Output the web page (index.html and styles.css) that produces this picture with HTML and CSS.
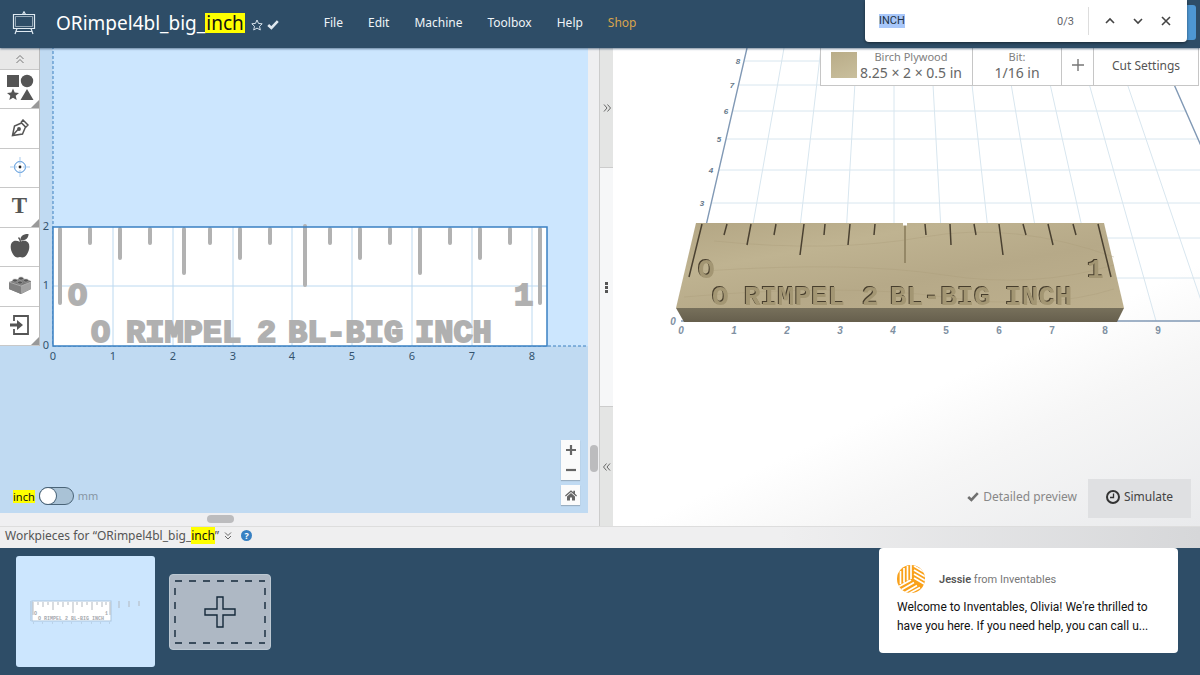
FILE: index.html
```html
<!DOCTYPE html>
<html lang="en">
<head>
<meta charset="utf-8">
<title>ORimpel4bl_big_inch</title>
<link rel="stylesheet" href="styles.css">
</head>
<body>
<header class="topbar">
  <a class="logo" href="#" aria-label="Home">
    <svg width="24" height="24" viewBox="0 0 24 24" fill="none" stroke="#dfeaf2" stroke-width="1.200"><path d="M1.500 3.500h21v14h-21zM10.500 3.500L12 .8l1.500 2.700M5 17.500l-2 5.500M19 17.500l2 5.500M4.500 20.500h15"/><path d="M3.500 5.500h17v10h-17z" stroke-width=".6"/></svg>
  </a>
  <h1 class="title">ORimpel4bl_big_<mark>inch</mark></h1>
  <button class="star" aria-label="Favorite"><svg width="12" height="12" viewBox="0 0 12 12" fill="none" stroke="#d6e2ec"><path d="M6 1l1.500 3.400 3.700.4-2.700 2.500.8 3.700L6 9.100 2.700 11l.8-3.700L.8 4.800l3.700-.4z"/></svg></button>
  <svg class="saved" width="12" height="10" viewBox="0 0 12 10" fill="none" stroke="#dfe8ef" stroke-width="2.600"><path d="M1.200 5l3.200 3L10.800 1.200"/></svg>
  <nav class="menu">
    <a href="#">File</a><a href="#">Edit</a><a href="#">Machine</a><a href="#">Toolbox</a><a href="#">Help</a><a class="shop" href="#">Shop</a>
  </nav>
  <button class="carve" aria-label="Carve"></button>
  <div class="findbar" role="search">
    <input class="find-input" aria-label="Find" value="INCH" size="4">
    <span class="find-count">0/3</span>
    <span class="find-actions">
    <button aria-label="Previous"><svg width="10" height="10" viewBox="0 0 10 10"><path d="M1 7l4-4 4 4"/></svg></button>
    <button aria-label="Next"><svg width="10" height="10" viewBox="0 0 10 10"><path d="M1 3l4 4 4-4"/></svg></button>
    <button aria-label="Close"><svg width="10" height="10" viewBox="0 0 10 10"><path d="M1 1l8 8M9 1L1 9"/></svg></button>
    </span>
  </div>
</header>

<main class="workspace">
  <section class="editor">
    <div class="canvas">
      <svg class="drawing" width="100%" height="100%">
        <g transform="translate(53 298)">
          <rect class="sky" x="0" y="-400" width="2000" height="400"/>
          <path class="axis-dash" d="M0-400V0M0 0H2000"/>
          <rect class="sheet" x="0" y="-119" width="494" height="119"/>
          <path class="grid" d="M60-119V0M120-119V0M180-119V0M239-119V0M299-119V0M359-119V0M419-119V0M479-119V0M0-60H494"/>
          <path class="ticks" d="M7-117V-43M37-117V-103M67-117V-88M97-117V-103M131-117V-73M157-117V-103M187-117V-88M217-117V-103M252-120V-61M277-117V-103M307-117V-88M337-117V-103M367-117V-73M397-117V-103M427-117V-88M457-117V-103M487-117V-43"/>
          <rect class="sheet-edge" x="0" y="-119" width="494" height="119"/>
          <g class="slab">
            <text x="15" y="-41">O</text><text x="461" y="-41">1</text>
            <text x="38" y="-4">O</text><text x="73" y="-4">RIMPEL</text><text x="204" y="-4">2</text><text x="235" y="-4">BL-BIG</text><text x="362" y="-4">INCH</text>
          </g>
          <g class="ruler">
            <text x="0" y="14">0</text><text x="60" y="14">1</text><text x="120" y="14">2</text><text x="180" y="14">3</text><text x="239" y="14">4</text><text x="299" y="14">5</text><text x="359" y="14">6</text><text x="419" y="14">7</text><text x="479" y="14">8</text>
            <text x="-7" y="3">0</text><text x="-7" y="-57">1</text><text x="-7" y="-116">2</text>
          </g>
        </g>
      </svg>
      <div class="tools">
        <button class="collapse" aria-label="Collapse"><svg width="10" height="10" viewBox="0 0 10 10" fill="none" stroke="#777"><path d="M1.500 5L5 1.500 8.500 5M1.500 9L5 5.500 8.500 9"/></svg></button>
        <button class="tool more" aria-label="Shapes"><svg width="28" height="28" viewBox="0 0 28 28" fill="#555"><path d="M1 1h12v12H1z"/><circle cx="21" cy="7" r="6.200"/><path d="M7 14.500l1.700 4 4.300.4-3.300 2.800 1 4.300L7 23.700 3.300 26l1-4.300L1 18.900l4.300-.4zM21 15l6.500 11h-13z"/></svg></button>
        <button class="tool" aria-label="Pen"><svg width="18" height="18" viewBox="0 0 18 18" fill="none" stroke="#555" stroke-width="1.500"><path d="M1.500 16.500L3.500 7l7-3 4 4-3 7-10 1.500zM10 3.500L12 1l5 5-2.500 2.500M2 16l5-5.500"/><circle cx="8" cy="10" r="1.200" fill="#555"/></svg></button>
        <button class="tool" aria-label="Drill point"><svg width="20" height="20" viewBox="0 0 20 20" fill="none" stroke="#4a90d9"><circle cx="10" cy="10" r="5.500"/><path d="M10 0v7M10 13v7M0 10h7M13 10h7" stroke="#a9cbed"/><circle cx="10" cy="10" r="1.400" fill="#222" stroke="none"/></svg></button>
        <button class="tool more letter" aria-label="Text">T</button>
        <button class="tool" aria-label="Icons"><svg width="20" height="26" viewBox="0 0 20 26" fill="#555"><path d="M10 9C7 7.200 3.500 7.200 1.700 9.800c-2 3-.8 8 1.300 11.400 2 3 4 4 7 2.800 3 1.200 5 .2 7-2.800 2.100-3.400 3.300-8.400 1.300-11.400C16.500 7.200 13 7.200 10 9z"/><path d="M10.500 7.500C10 3.500 13 .8 18.500 1c.2 4-3 6.800-8 6.500z"/><path d="M10.500 9C10.500 7 10 6 8.500 4.500" fill="none" stroke="#555" stroke-width="1.500"/></svg></button>
        <button class="tool" aria-label="Apps"><svg width="22" height="18" viewBox="0 0 22 18"><path d="M0 6L13 2l9 3v8l-10 5-12-5z" fill="#777"/><path d="M12 10l10-4v7l-10 5z" fill="#a2a2a2"/><path d="M0 6v7l12 5v-8z" fill="#808080"/><path d="M0 6l12 4 10-4" fill="none" stroke="#bbb" stroke-width=".7"/><g fill="#555" stroke="#bbb" stroke-width=".5"><ellipse cx="6" cy="4.500" rx="2.600" ry="1.600"/><ellipse cx="12" cy="2.500" rx="2.600" ry="1.600"/><ellipse cx="11" cy="6.500" rx="2.600" ry="1.600"/><ellipse cx="17" cy="4.500" rx="2.600" ry="1.600"/></g></svg></button>
        <button class="tool more" aria-label="Import"><svg width="20" height="20" viewBox="0 0 20 20" fill="none" stroke="#555" stroke-width="1.800"><path d="M4 6V1h14v18H4v-5"/><path d="M0 8.500h7V5l6 5-6 5v-3.500H0z" fill="#555" stroke="none"/></svg></button>
      </div>
      <label class="units"><mark>inch</mark><input type="checkbox" role="switch"><span>mm</span></label>
      <div class="zoom">
        <div class="zoom-pair">
          <button aria-label="Zoom in"><svg width="10" height="10" viewBox="0 0 10 10"><path d="M5 0v10M0 5h10"/></svg></button>
          <button aria-label="Zoom out"><svg width="10" height="10" viewBox="0 0 10 10"><path d="M0 5h10"/></svg></button>
        </div>
        <button class="home" aria-label="Reset view"><svg width="12" height="11" viewBox="0 0 12 11"><path d="M0 5.500L6 .3l2.300 2V.8H10v3l2 1.700-.8.900L6 2 .8 6.400zM2 6.400L6 3.100l4 3.300V10.500H7v-3H5v3H2z"/></svg></button>
      </div>
    </div>
    <div class="vscroll"><span class="vthumb"></span></div>
    <div class="hscroll"><span class="hthumb"></span></div>
  </section>
  <div class="splitter">
    <button class="split-end" aria-label="Expand editor"><svg width="8" height="8" viewBox="0 0 8 8"><path d="M1 .5L4 4 1 7.500M4.500 .5l3 3.500-3 3.500"/></svg></button>
    <div class="split-mid"><i></i><i></i><i></i></div>
    <button class="split-end" aria-label="Expand preview"><svg width="8" height="8" viewBox="0 0 8 8"><path d="M3.500 .5L.5 4l3 3.500M7 .5L4 4l3 3.500"/></svg></button>
  </div>
  <section class="preview">
    <svg class="drawing" width="100%" height="100%">
      <defs>
        <linearGradient id="wood" x1="0" y1="0" x2="1" y2="1"><stop offset="0" stop-color="#b3a684"/><stop offset=".3" stop-color="#bfb391"/><stop offset=".6" stop-color="#b6a988"/><stop offset="1" stop-color="#bdb08e"/></linearGradient>
        <linearGradient id="side" x1="0" y1="0" x2="0" y2="1"><stop offset="0" stop-color="#77705b"/><stop offset="1" stop-color="#665f4d"/></linearGradient>
      </defs>
      <g transform="translate(71 273)">
        <path class="floor" d="M52 0L100-273M105 0L137-273M157 0L173-273M210 0V-273M262 0L247-273M314 0L284-273M367 0L321-273M419 0L358-273M472 0L395-273M524 0L431-273M60-260H480M54-236H491M48-210H503M42-182H515M35-151H2000M27-118H2000M19-83H2000M10-43H2000"/>
        <path class="edge-line" d="M0 0L63-273M-3 0H2000M474-273L594 0"/>
        <path d="M12-98H420L440-13H-8z" fill="url(#wood)"/>
        <path d="M30-80q120 12 210-4t190 20M20-50q150-10 240 4t170-10M0-24q160-14 260 0t170-8" fill="none" stroke="#a99c78" stroke-opacity=".35"/>
        <path d="M-8-13H440L433 1H0z" fill="url(#side)"/>
        <path class="cut" d="M18-97L5-44M43-97L40-86M67-97L63-76M92-97L90-86M120-97L116-66M141-97L140-86M166-97L164-76M191-97L190-86M241-97L242-86M266-97L267-76M290-97L292-86M315-97L319-66M339-97L342-86M364-97L369-76M389-97L392-86M414-97L427-44"/>
        <path d="M221-97V-58" stroke="#958867" stroke-width="2"/>
        <path d="M219-97h4" stroke="#fff" stroke-width="3"/>
        <g class="carved">
          <text x="14" y="-43">O</text><text x="403" y="-43">1</text>
          <text x="28" y="-16">O</text><text x="60" y="-16">RIMPEL</text><text x="178" y="-16">2</text><text x="206" y="-16">BL-BIG</text><text x="321" y="-16">INCH</text>
        </g>
        <g class="marks slanted">
          <text x="-3" y="13">0</text><text x="50" y="13">1</text><text x="103" y="13">2</text><text x="156" y="13">3</text><text x="209" y="13">4</text><text x="-11" y="4">0</text>
        </g>
        <g class="marks"><text x="262" y="13">5</text><text x="315" y="13">6</text><text x="368" y="13">7</text><text x="421" y="13">8</text><text x="474" y="13">9</text></g>
        <g class="marks slanted far"><text x="18" y="-115">3</text><text x="27" y="-148">4</text><text x="35" y="-179">5</text><text x="42" y="-207">6</text><text x="48" y="-233">7</text><text x="54" y="-257">8</text></g>
      </g>
    </svg>
    <div class="settings">
      <button class="material"><i class="swatch"></i><span class="stack"><small>Birch Plywood</small><b>8.25 × 2 × 0.5 in</b></span></button>
      <button class="bit"><span class="stack"><small>Bit:</small><b>1/16 in</b></span></button>
      <button class="add-bit" aria-label="Add bit"><svg width="12" height="12" viewBox="0 0 12 12" stroke="#777" stroke-width="1.400"><path d="M6 0v12M0 6h12"/></svg></button>
      <button class="cut-settings">Cut Settings</button>
    </div>
    <div class="preview-actions">
      <button class="detail"><svg width="12" height="10" viewBox="0 0 12 10" fill="none" stroke="#707070" stroke-width="2.600"><path d="M1.200 5l3.200 3L10.800 1.200"/></svg>Detailed preview</button>
      <button class="simulate"><svg width="14" height="14" viewBox="0 0 14 14" fill="none" stroke="#333" stroke-width="2"><circle cx="7" cy="7" r="6"/><path d="M7.500 3.500v4H4" stroke-width="1.300"/></svg>Simulate</button>
    </div>
  </section>
</main>

<div class="pieces-bar">
  <h2>Workpieces for “ORimpel4bl_big_<mark>inch</mark>”</h2>
  <button aria-label="Collapse workpieces"><svg width="8" height="8" viewBox="0 0 8 8" fill="none" stroke="#666"><path d="M1 .5l3 3 3-3M1 4l3 3 3-3"/></svg></button>
  <button class="help" aria-label="Help">?</button>
</div>

<footer class="pieces">
  <button class="thumb" aria-label="Workpiece 1">
    <svg width="112" height="26" viewBox="0 0 112 26">
      <rect x="2" y="2" width="79" height="20" fill="#fff" stroke="#a9c4dd"/>
      <path d="M3 3v13M8 3v3M13 3v5M18 3v3M23 3v8M28 3v3M33 3v5M38 3v3M43 3v11M47 3v3M52 3v5M57 3v3M62 3v8M67 3v3M72 3v5M76 3v3M80 3v13M89 2v7M99 2v6M109 2v5" stroke="#b3b9c0"/>
      <path d="M0 2v20M3 24h1M12 24h1M22 24h1M32 24h1M41 24h1M51 24h1M61 24h1M70 24h1M79 24h1" stroke="#a9bdd0"/>
      <g class="mini"><text x="4" y="16">O</text><text x="75" y="16">1</text><text x="8" y="21">O RIMPEL 2 BL-BIG INCH</text></g>
    </svg>
  </button>
  <button class="new-piece" aria-label="Add workpiece">
    <svg width="92" height="64" viewBox="0 0 92 64" fill="none" stroke="#14293a" stroke-width="1.400"><path d="M1 1h90M1 63h90" stroke-dasharray="7 7"/><path d="M1 8v54M91 8v54" stroke-dasharray="7 7"/><path d="M43 17h6v12h12v6H49v12h-6V35H31v-6h12z"/></svg>
  </button>
  <aside class="message">
    <div class="from">
      <svg width="28" height="28" viewBox="0 0 28 28"><defs><clipPath id="disc"><circle cx="14" cy="14" r="14"/></clipPath></defs><g clip-path="url(#disc)"><path d="M0 0h28v28H0z" fill="#f9a11b"/><path d="M3.500 6v13M7 3v14.500M10.500 1v14.500M14 0v14M17 5l11 6.500M17 1l11 6.500M17 9l11 6.500M17 13l11 6.500M1 22l13-7M4 25l13-7.500M7 28l13-7.500M12 28.500l11-6" stroke="#fff" stroke-width="1.700" fill="none"/></g></svg>
      <p><strong>Jessie</strong> from Inventables</p>
    </div>
    <p class="body">Welcome to Inventables, Olivia! We're thrilled to<br>have you here. If you need help, you can call u...</p>
  </aside>
</footer>
</body>
</html>
```

FILE: styles.css
```css
* { box-sizing: border-box; }
body {
  margin: 0;
  min-height: 100vh;
  display: flex;
  flex-direction: column;
  font-family: "Noto Sans", sans-serif;
  font-size: 12px;
  color: #555;
  background: #2e4d67;
}
button { border: 0; padding: 0; margin: 0; background: none; font: inherit; color: inherit; display: flex; align-items: center; justify-content: center; }
mark { background: #ff0; color: #111; }
h1, h2, p { margin: 0; font-weight: 400; }

.topbar {
  position: relative;
  z-index: 2;
  flex: none;
  height: 48px;
  display: flex;
  align-items: center;
  padding: 0 12px 3px;
  color: #fff;
  background: #2e4d67;
  box-shadow: 0 1px 2px rgba(30, 60, 90, .6);
}
.logo { display: flex; }
.title { margin-left: 20px; font-size: 19px; line-height: 22px; }
.title mark { display: inline-block; line-height: 20px; padding: 0 1px; }
.star { margin: 5px 4px 0 6px; }
.saved { margin-top: 5px; }
.menu { display: flex; gap: 25px; margin-left: 45px; }
.menu a { color: #eef4f8; text-decoration: none; }
.menu .shop { color: #d9a44c; }
.carve { position: absolute; right: 4px; top: 5px; width: 60px; height: 35px; border-radius: 3px; background: #4e97d3; }
.findbar {
  position: absolute;
  right: 13px;
  top: 0;
  width: 322px;
  height: 42px;
  display: flex;
  align-items: center;
  padding: 0 7px 0 14px;
  font: 12px Roboto, sans-serif;
  color: #5f6368;
  background: #fff;
  border-radius: 0 0 4px 4px;
  box-shadow: 0 1px 3px rgba(0, 0, 0, .5);
}
.find-input { width: 26px; height: 14px; border: 0; padding: 0; outline: 0; font: 11px/14px Roboto, sans-serif; color: #234; background: #a8c7fa; }
.find-count { margin-left: auto; font-size: 11px; }
.find-actions { display: flex; margin-left: 14px; padding-left: 7px; border-left: 1px solid #ddd; height: 28px; }
.find-actions button { width: 28px; }
.find-actions path { fill: none; stroke: #444; stroke-width: 1.600; }

.workspace { flex: 1 0 478px; display: flex; }
.editor { flex: 599 1 0; min-width: 0; display: grid; grid-template-columns: 1fr 11px; grid-template-rows: 1fr 13px; background: #efeff1; }
.canvas { position: relative; overflow: hidden; background: #c0daf2; display: flex; justify-content: space-between; align-items: flex-start; }
.drawing { position: absolute; inset: 0; overflow: hidden; }
.sky { fill: #cce6fe; }
.axis-dash { fill: none; stroke: #3c80c0; stroke-dasharray: 3 2; }
.sheet { fill: #fff; }
.sheet-edge { fill: none; stroke: #3a80c2; stroke-width: 1.500; }
.grid { fill: none; stroke: #bcd9f0; }
.ticks { fill: none; stroke: #b2b2b2; stroke-width: 4; stroke-linecap: round; }
.slab { font: bold 32px "Liberation Mono", monospace; fill: #b0b0b0; stroke: #b0b0b0; stroke-width: 2px; }
.ruler { font-size: 11px; fill: #33536e; text-anchor: middle; }

.tools { position: relative; width: 40px; height: 298px; display: flex; flex-direction: column; background: #fff; border-right: 1px solid #bbb; }
.collapse { flex: 0 0 21px; background: #e8e8e8; }
.tool { position: relative; flex: 1; border-top: 1px solid #c8c8c8; padding-bottom: 2px; }
.tool:last-child { border-bottom: 1px solid #c8c8c8; }
.more::after { content: ""; position: absolute; right: 0; bottom: 0; border: 4px solid #999; border-top-color: transparent; border-left-color: transparent; }
.letter { font: bold 23px "Liberation Serif", serif; }
.units { position: absolute; left: 13px; bottom: 8px; display: flex; align-items: center; gap: 4px; color: #8796a4; font-size: 11px; line-height: 18px; }
.units mark { line-height: 13px; }
.units input { appearance: none; margin: 0; width: 35px; height: 18px; border: 1px solid #4a6478; border-radius: 9px; background: #a9c2d6; }
.units input::before { content: ""; display: block; width: 16px; height: 16px; border-radius: 50%; background: #fff; box-shadow: 0 0 0 1px #4a6478; }
.zoom { position: absolute; right: 8px; bottom: 8px; display: grid; gap: 5px; }
.zoom button { width: 19px; height: 20px; }
.zoom-pair path { stroke: #666; stroke-width: 2.200; }
.home path { fill: #666; }
.zoom-pair, .home { background: #fbfbfb; box-shadow: 0 1px 1px rgba(0, 0, 0, .2); }
.vscroll { display: flex; align-items: flex-end; justify-content: center; padding-bottom: 41px; }
.vthumb { width: 8px; height: 27px; border-radius: 4px; background: #bcbcbe; }
.hscroll { grid-column: 1 / -1; padding: 2px 0 0 207px; }
.hthumb { display: block; width: 27px; height: 8px; border-radius: 4px; background: #bcbcbe; }

.splitter { flex: 0 0 14px; display: flex; flex-direction: column; border-left: 1px solid #ccc; }
.splitter path { fill: none; stroke: #666; }
.split-end { flex: 1; background: #e4e5e4; }
.split-mid { flex: 2; display: flex; flex-direction: column; gap: 1px; align-items: center; justify-content: center; background: #f6f7f8; border: solid #ccc; border-width: 1px 0; }
.split-mid i { width: 3px; height: 3px; background: #555; }

.preview { position: relative; flex: 587 1 0; min-width: 0; display: flex; flex-direction: column; justify-content: space-between; align-items: flex-end; background: linear-gradient(155deg, #fff 65%, #f6f6f6 77%, #e9eaec 100%); }
.floor { fill: none; stroke: #d8e6ef; }
.edge-line { fill: none; stroke: #8199b5; stroke-width: 1.400; }
.cut { fill: none; stroke: #4a4131; stroke-width: 1.500; }
.carved { font: bold 28px "Liberation Mono", monospace; fill: #a39673; filter: drop-shadow(-1px -1px 0 #463d2c); }
.marks { font: bold 10px "Liberation Sans", sans-serif; fill: #8090a2; text-anchor: middle; }
.slanted { font-style: italic; }
.far { font-size: 8px; fill: #66788a; }
.settings { position: relative; display: flex; height: 38px; margin-right: 1px; background: #fff; border: 1px solid #c6c6c6; border-top: 0; }
.settings button { padding-bottom: 3px; }
.settings button + button { border-left: 1px solid #c6c6c6; }
.stack { display: grid; }
.stack small { font-size: 11px; line-height: 15px; color: #808080; }
.stack b { font-weight: 400; font-size: 14px; line-height: 17px; color: #666; }
.material { width: 151px; gap: 3px; }
.swatch { width: 26px; height: 26px; background: linear-gradient(160deg, #b9ac88, #c9bf9d); }
.bit { width: 89px; }
.add-bit { width: 32px; }
.cut-settings { width: 105px; }
.preview-actions { position: relative; display: flex; padding: 0 9px 8px; gap: 11px; font-size: 12px; }
.preview-actions button { padding-bottom: 4px; }
.detail { gap: 4px; color: #888; }
.simulate { width: 103px; height: 39px; gap: 4px; color: #444; background: #dfe0e2; }

.pieces-bar { flex: none; height: 22px; display: flex; align-items: center; gap: 5px; padding: 0 5px 4px; background: linear-gradient(90deg, #efeff0 65%, #d6d7d9); border-top: 1px solid #ddd; }
.pieces-bar h2 { font-size: 12px; line-height: 15px; }
.help { width: 11px; height: 11px; margin-left: 4px; border-radius: 50%; background: #3780c2; color: #fff; font-weight: 700; font-size: 9px; }
.pieces { position: relative; flex: none; display: flex; align-items: center; gap: 14px; padding: 8px 16px; background: #2e4d67; }
.thumb { width: 139px; height: 111px; border-radius: 3px; background: #cce6fe; justify-content: flex-start; padding-left: 14px; }
.mini { font: bold 5px "Liberation Mono", monospace; fill: #a4a8ad; }
.new-piece { width: 102px; height: 76px; border-radius: 4px; background: #aeb8c4; border: 1px solid #bcc8d2; }
.message { position: absolute; right: 22px; top: 0; width: 299px; height: 105px; padding: 17px 18px; background: #fff; border-radius: 4px; font-family: Roboto, sans-serif; font-size: 11px; color: #777; }
.from { display: flex; align-items: center; gap: 14px; }
.from strong { font-weight: 600; color: #555; }
.body { margin-top: 5px; color: #111; font-size: 12px; line-height: 19px; white-space: nowrap; }
```
